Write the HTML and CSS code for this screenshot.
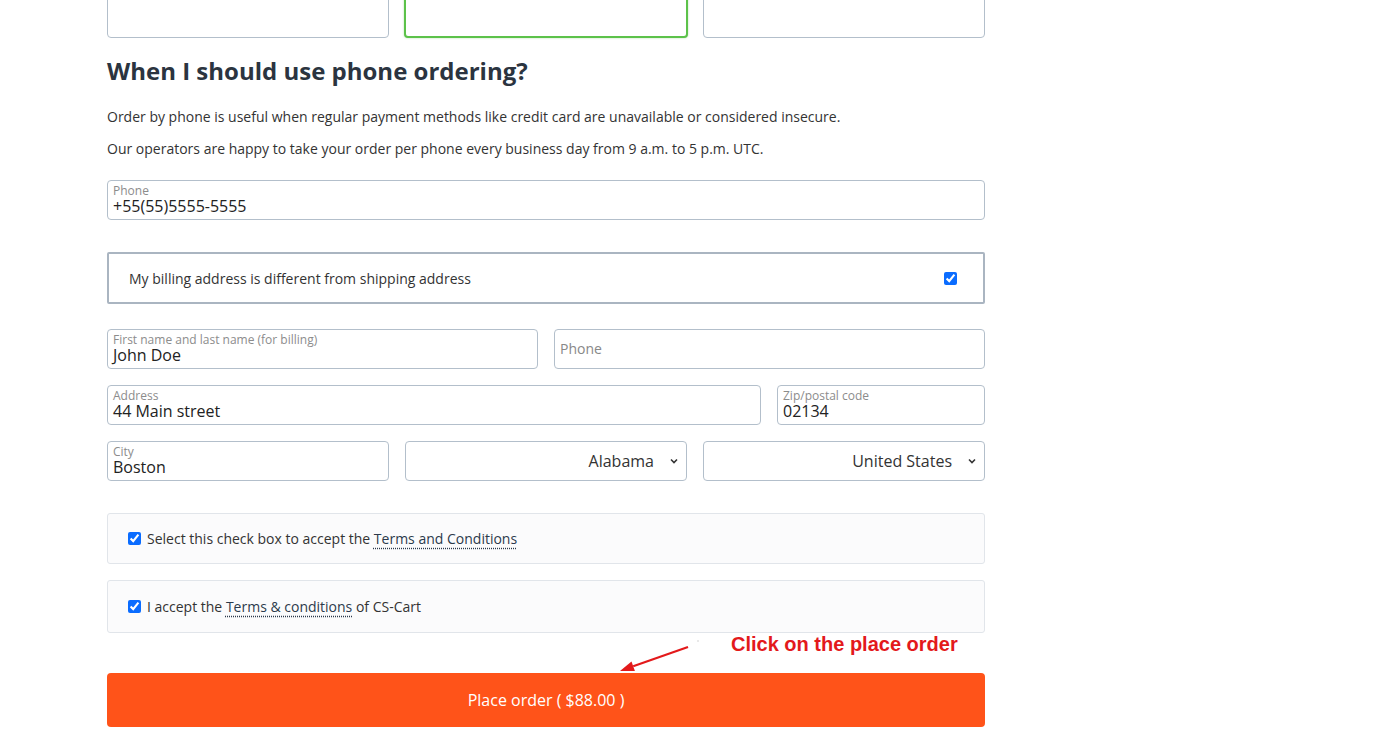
FILE: index.html
```html
<!DOCTYPE html>
<html>
<head>
<meta charset="utf-8">
<title>Checkout</title>
<link rel="stylesheet" href="styles.css">
</head>
<body>
<div class="wrap">
	<div class="row top-row">
		<div class="field blank"></div>
		<div class="field blank focus"></div>
		<div class="field blank"></div>
	</div>

	<h2 class="title">When I should use phone ordering?</h2>
	<p class="para first">Order by phone is useful when regular payment methods like credit card are unavailable or considered insecure.</p>
	<p class="para">Our operators are happy to take your order per phone every business day from 9 a.m. to 5 p.m. UTC.</p>

	<div class="field phone-main">
		<span class="lbl">Phone</span>
		<span class="val">+55(55)5555-5555</span>
	</div>

	<label class="billing">
		<span>My billing address is different from shipping address</span>
		<input type="checkbox" checked>
	</label>

	<div class="row r1">
		<div class="field half">
			<span class="lbl">First name and last name (for billing)</span>
			<span class="val">John Doe</span>
		</div>
		<div class="field half placeholder">Phone</div>
	</div>
	<div class="row r2">
		<div class="field addr">
			<span class="lbl">Address</span>
			<span class="val">44 Main street</span>
		</div>
		<div class="field zip">
			<span class="lbl">Zip/postal code</span>
			<span class="val">02134</span>
		</div>
	</div>
	<div class="row r2">
		<div class="field third">
			<span class="lbl">City</span>
			<span class="val">Boston</span>
		</div>
		<div class="field third select">
			<span>Alabama</span>
			<svg width="10" height="10" viewBox="0 0 10 10"><path d="M2 3.5 L5 6.5 L8 3.5" fill="none" stroke="#333" stroke-width="1.6"/></svg>
		</div>
		<div class="field third select">
			<span>United States</span>
			<svg width="10" height="10" viewBox="0 0 10 10"><path d="M2 3.5 L5 6.5 L8 3.5" fill="none" stroke="#333" stroke-width="1.6"/></svg>
		</div>
	</div>

	<div class="terms t1">
		<input type="checkbox" checked>
		<span>Select this check box to accept the <a href="#">Terms and Conditions</a></span>
	</div>
	<div class="terms t2">
		<input type="checkbox" checked>
		<span>I accept the <a href="#">Terms &amp; conditions</a> of CS-Cart</span>
	</div>

	<div class="order-area">
		<svg class="arrow" width="100" height="40" viewBox="0 0 100 40">
			<circle cx="91" cy="8" r="0.8" fill="#ccc"/>
			<line x1="81" y1="14" x2="26.2" y2="33.3" stroke="#e3191b" stroke-width="2.2"/>
			<polygon points="13,38 27.9,38 24.5,28.6" fill="#e3191b"/>
		</svg>
		<span class="note-text">Click on the place order</span>
		<button class="place">Place order ( $88.00 )</button>
	</div>
</div>
</body>
</html>
```
FILE: styles.css
```css
body{
	margin:0;
	background:#fff;
	font-family:"Open Sans","Noto Sans",sans-serif;
	color:#333;
}
.wrap{
	width:878px;
	margin-left:107px;
}
.row{
	display:flex;
	gap:16px;
}
.top-row{
	gap:15px;
	margin-top:-10px;
}
.field{
	box-sizing:border-box;
	height:40px;
	border:1px solid #b3bfcb;
	border-radius:4px;
	padding:3px 5px 0;
	background:#fff;
	display:flex;
	flex-direction:column;
}
.field.blank{
	flex:1;
	height:48px;
}
.field.focus{
	border:2px solid #5cc24a;
	box-shadow:0 0 2px rgba(92,194,74,.5);
}
.lbl{
	font-size:12px;
	line-height:13px;
	color:#8c8c8c;
}
.val{
	font-size:16px;
	line-height:18px;
	color:#222;
}
.title{
	margin:18px 0 0;
	font-size:24px;
	line-height:29px;
	font-weight:700;
	color:#2b3440;
}
.para{
	margin:12px 0 0;
	font-size:14px;
	line-height:20px;
}
.para.first{
	margin-top:22px;
}
.phone-main{
	margin-top:21px;
}
.billing{
	box-sizing:border-box;
	height:52px;
	margin-top:32px;
	border:2px solid #aab5c1;
	border-radius:2px;
	padding:0 26px 0 20px;
	display:flex;
	align-items:center;
	justify-content:space-between;
	font-size:14px;
}
input[type=checkbox]{
	margin:0;
	width:13px;
	height:13px;
	accent-color:#0a6cff;
}
.r1{
	margin-top:25px;
}
.r2{
	margin-top:16px;
}
.half{
	width:431px;
}
.placeholder{
	justify-content:center;
	padding:0 0 1px 5px;
	font-size:14px;
	color:#888;
}
.addr{
	width:654px;
}
.zip{
	flex:1;
}
.third{
	width:282px;
}
.select{
	flex-direction:row;
	align-items:center;
	justify-content:flex-end;
	gap:15px;
	padding:0 7px 0 0;
	font-size:16px;
	color:#333;
}
.terms{
	box-sizing:border-box;
	margin-top:32px;
	height:51px;
	background:#fbfbfc;
	border:1px solid #e1e5ea;
	border-radius:3px;
	padding:0 20px;
	display:flex;
	align-items:center;
	gap:6px;
	font-size:14px;
}
.terms.t2{
	margin-top:16px;
	height:53px;
}
.terms a{
	color:#2c3a4b;
	text-decoration:underline dotted #2c3a4b;
	text-underline-offset:4px;
}
.order-area{
	position:relative;
	margin-top:40px;
}
.place{
	display:block;
	width:100%;
	height:54px;
	border:0;
	border-radius:4px;
	background:#ff5319;
	color:#fff;
	font-family:"Open Sans","Noto Sans",sans-serif;
	font-size:16px;
}
.arrow{
	position:absolute;
	left:500px;
	top:-40px;
}
.note-text{
	position:absolute;
	left:624px;
	top:-40px;
	font-family:"Liberation Sans",Arial,sans-serif;
	font-weight:700;
	font-size:20px;
	line-height:23px;
	color:#e3191b;
}
```
